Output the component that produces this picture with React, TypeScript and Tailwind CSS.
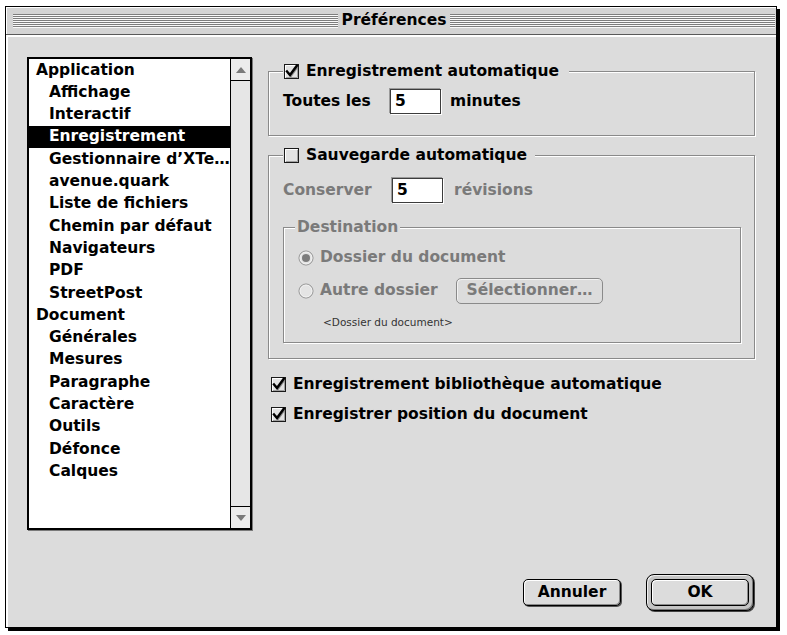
import React from 'react';

function CheckBox({ checked }: { checked?: boolean }) {
  return (
    <svg width="15" height="15" viewBox="0 0 15 15" className="shrink-0 overflow-visible">
      <rect x="0.5" y="0.5" width="14" height="14" fill="#e2e2e2" stroke="#1a1a1a" />
      <path d="M1.5 13.5V1.5H13.5" stroke="#ffffff" fill="none" />
      <path d="M2 13.5H13.5V2" stroke="#a0a0a0" fill="none" />
      {checked && (
        <>
          <path d="M4 8.5 L7 12 L13.5 3" stroke="#8a8a8a" strokeWidth="2" fill="none" />
          <path d="M3 7.5 L6 11 L12.8 1.8" stroke="#000" strokeWidth="2.4" fill="none" strokeLinecap="square" />
        </>
      )}
    </svg>
  );
}

function Radio({ selected }: { selected?: boolean }) {
  return (
    <svg width="16" height="16" viewBox="0 0 16 16" className="shrink-0">
      <circle cx="8" cy="8" r="7" fill="#e4e4e4" stroke="#8e8e8e" />
      <circle cx="8" cy="8" r="6" fill="none" stroke="#f4f4f4" strokeWidth="0.8" />
      {selected && <circle cx="8" cy="8" r="4" fill="#7c7c7c" />}
    </svg>
  );
}

function EditBox({ value }: { value: string }) {
  return (
    <div className="w-[51px] h-[25px] shrink-0 bg-white border border-[#3c3c3c] shadow-[-1px_-1px_0_#9a9a9a,1px_1px_0_#ffffff] flex items-center pl-[4px] text-black">
      {value}
    </div>
  );
}

const items: { label: string; level: number; selected?: boolean }[] = [
  { label: 'Application', level: 0 },
  { label: 'Affichage', level: 1 },
  { label: 'Interactif', level: 1 },
  { label: 'Enregistrement', level: 1, selected: true },
  { label: 'Gestionnaire d’XTe…', level: 1 },
  { label: 'avenue.quark', level: 1 },
  { label: 'Liste de fichiers', level: 1 },
  { label: 'Chemin par défaut', level: 1 },
  { label: 'Navigateurs', level: 1 },
  { label: 'PDF', level: 1 },
  { label: 'StreetPost', level: 1 },
  { label: 'Document', level: 0 },
  { label: 'Générales', level: 1 },
  { label: 'Mesures', level: 1 },
  { label: 'Paragraphe', level: 1 },
  { label: 'Caractère', level: 1 },
  { label: 'Outils', level: 1 },
  { label: 'Défonce', level: 1 },
  { label: 'Calques', level: 1 },
];

export default function App() {
  return (
    <div className="w-[787px] h-[635px] bg-white pt-[6px] pl-[5px] font-['DejaVu_Sans',sans-serif] font-bold text-[15.5px] text-black">
      <div className="w-[772px] h-[622px] border border-black shadow-[3px_3px_0_#000] flex flex-col bg-[#dcdcdc]">
        {/* Title bar */}
        <div className="h-[28px] shrink-0 flex items-center bg-[#d4d4d4] border-b border-[#5a5a5a] shadow-[inset_1px_1px_0_#ffffff]">
          <div className="ml-[7px] flex-1 h-[14px] bg-[repeating-linear-gradient(to_bottom,#7e7e7e_0px,#7e7e7e_1px,#fafafa_1px,#fafafa_2px)]" />
          <div className="px-[4px] leading-none">Préférences</div>
          <div className="mr-[1px] flex-1 h-[14px] bg-[repeating-linear-gradient(to_bottom,#7e7e7e_0px,#7e7e7e_1px,#fafafa_1px,#fafafa_2px)]" />
        </div>

        {/* Content */}
        <div className="flex-1 flex pl-[21px] pt-[22px] pr-[21px] pb-[16px] shadow-[inset_2px_2px_0_#ffffff]">
          {/* List */}
          <div className="w-[225px] h-[473px] shrink-0 border-2 border-black shadow-[1px_1px_0_#7a7a7a] flex bg-white">
            <div className="flex-1 overflow-hidden">
              {items.map((it) => (
                <div
                  key={it.label}
                  className={`h-[22.3px] flex items-center whitespace-nowrap overflow-hidden ${
                    it.level === 0 ? 'pl-[7px]' : 'pl-[20px]'
                  } ${it.selected ? 'bg-black text-white' : ''}`}
                >
                  {it.label}
                </div>
              ))}
            </div>
            <div className="w-[20px] shrink-0 border-l border-black bg-[#e6e6e6] flex flex-col">
              <div className="h-[22px] border-b border-black bg-[#ececec] flex items-center justify-center">
                <svg width="10" height="6" viewBox="0 0 10 6">
                  <path d="M5 0 L10 6 L0 6 Z" fill="#7a7a7a" />
                </svg>
              </div>
              <div className="flex-1" />
              <div className="h-[22px] border-t border-black bg-[#ececec] flex items-center justify-center">
                <svg width="10" height="6" viewBox="0 0 10 6">
                  <path d="M0 0 L10 0 L5 6 Z" fill="#7a7a7a" />
                </svg>
              </div>
            </div>
          </div>

          {/* Right column */}
          <div className="ml-[16px] w-[487px] flex flex-col">
            {/* Group 1 */}
            <fieldset className="mt-[6px] border border-[#8a8a8a] shadow-[1px_1px_0_#ffffff,inset_1px_1px_0_#ffffff] pl-[14px] pt-[9px] pb-[21px]">
              <legend className="pl-[1px] pr-[10px] h-[17px] flex items-center gap-[7px] bg-[#dcdcdc] leading-none">
                <CheckBox checked />
                <span>Enregistrement automatique</span>
              </legend>
              <div className="h-[25px] flex items-center">
                <span className="w-[107px]">Toutes les</span>
                <EditBox value="5" />
                <span className="ml-[9px]">minutes</span>
              </div>
            </fieldset>

            {/* Group 2 */}
            <fieldset className="mt-[11px] border border-[#8a8a8a] shadow-[1px_1px_0_#ffffff,inset_1px_1px_0_#ffffff] pl-[14px] pr-[13px] pt-[14px] pb-[15px]">
              <legend className="pl-[1px] pr-[8px] h-[17px] flex items-center gap-[7px] bg-[#dcdcdc] leading-none">
                <CheckBox />
                <span>Sauvegarde automatique</span>
              </legend>
              <div className="h-[25px] flex items-center text-[#7a7a7a]">
                <span className="w-[109px]">Conserver</span>
                <EditBox value="5" />
                <span className="ml-[11px]">révisions</span>
              </div>

              <fieldset className="mt-[16px] border border-[#8a8a8a] shadow-[1px_1px_0_#ffffff,inset_1px_1px_0_#ffffff] pl-[14px] pt-[11px] pb-[13px] text-[#7a7a7a]">
                <legend className="ml-[-3px] px-[2px] h-[17px] flex items-center bg-[#dcdcdc] leading-none">
                  Destination
                </legend>
                <div className="h-[22px] flex items-center gap-[6px]">
                  <Radio selected />
                  <span>Dossier du document</span>
                </div>
                <div className="mt-[9px] h-[26px] flex items-center">
                  <Radio />
                  <span className="ml-[6px] w-[136px]">Autre dossier</span>
                  <div className="w-[147px] h-[26px] rounded-[5px] border border-[#8a8a8a] bg-[#dcdcdc] shadow-[inset_1px_1px_0_#f2f2f2] flex items-center justify-center text-[#7a7a7a]">
                    Sélectionner…
                  </div>
                </div>
                <div className="mt-[11px] h-[14px] ml-[25px] flex items-center font-normal text-[10.5px] text-[#333333] leading-none">
                  &lt;Dossier du document&gt;
                </div>
              </fieldset>
            </fieldset>

            {/* Bottom checkboxes */}
            <div className="mt-[17px] ml-[3px] h-[17px] flex items-center gap-[7px]">
              <CheckBox checked />
              <span>Enregistrement bibliothèque automatique</span>
            </div>
            <div className="mt-[13px] ml-[3px] h-[17px] flex items-center gap-[7px]">
              <CheckBox checked />
              <span>Enregistrer position du document</span>
            </div>

            {/* Buttons */}
            <div className="mt-auto mr-[1px] flex justify-end items-center">
              <div className="w-[98px] h-[27px] rounded-[5px] border border-black bg-[#dcdcdc] shadow-[inset_1px_1px_0_#ffffff,inset_-1px_-1px_0_#8a8a8a,1px_1px_0_#555555] flex items-center justify-center">
                Annuler
              </div>
              <div className="ml-[25px] w-[108px] h-[37px] rounded-[8px] border border-black bg-[#c4c4c4] shadow-[inset_1px_1px_0_#eeeeee,inset_-1px_-1px_0_#777777,1px_1px_0_#444444] p-[4px]">
                <div className="w-full h-full rounded-[5px] border border-black bg-[#dcdcdc] shadow-[inset_1px_1px_0_#ffffff,inset_-1px_-1px_0_#8a8a8a] flex items-center justify-center">
                  OK
                </div>
              </div>
            </div>
          </div>
        </div>
      </div>
    </div>
  );
}
